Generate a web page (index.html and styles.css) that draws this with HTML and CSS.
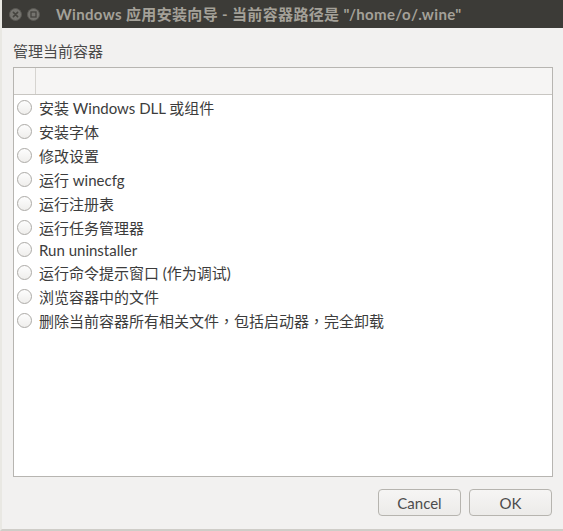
FILE: index.html
```html
<!DOCTYPE html>
<html lang="zh-CN">
<head>
<meta charset="utf-8">
<title>Windows 应用安装向导</title>
<link rel="stylesheet" href="styles.css">
</head>
<body>
<div class="window">
  <div class="titlebar">
    <div class="wm-buttons">
      <svg class="wm-btn" width="13" height="13" viewBox="0 0 13 13">
        <circle cx="6.5" cy="6.5" r="6" fill="#75746f" stroke="#5a5954" stroke-width="1"/>
        <path d="M4.4 4.4 L8.6 8.6 M8.6 4.4 L4.4 8.6" stroke="#45443f" stroke-width="1.6" stroke-linecap="round"/>
      </svg>
      <svg class="wm-btn" width="13" height="13" viewBox="0 0 13 13">
        <circle cx="6.5" cy="6.5" r="6" fill="#75746f" stroke="#5a5954" stroke-width="1"/>
        <rect x="4" y="4" width="5" height="5" fill="none" stroke="#45443f" stroke-width="1.3"/>
      </svg>
    </div>
    <div class="title">Windows 应用安装向导 - 当前容器路径是 "/home/o/.wine"</div>
  </div>
  <div class="content">
    <div class="label">管理当前容器</div>
    <div class="list">
      <div class="list-header">
        <div class="col-a"></div>
        <div class="col-b"></div>
      </div>
      <div class="rows">
        <div class="row"><span class="radio"></span><span class="text">安装 Windows DLL 或组件</span></div>
        <div class="row"><span class="radio"></span><span class="text">安装字体</span></div>
        <div class="row"><span class="radio"></span><span class="text">修改设置</span></div>
        <div class="row"><span class="radio"></span><span class="text">运行 winecfg</span></div>
        <div class="row"><span class="radio"></span><span class="text">运行注册表</span></div>
        <div class="row"><span class="radio"></span><span class="text">运行任务管理器</span></div>
        <div class="row short"><span class="radio"></span><span class="text">Run uninstaller</span></div>
        <div class="row"><span class="radio"></span><span class="text">运行命令提示窗口 (作为调试)</span></div>
        <div class="row"><span class="radio"></span><span class="text">浏览容器中的文件</span></div>
        <div class="row"><span class="radio"></span><span class="text">删除当前容器所有相关文件<span class="punct" lang="zh-TW">，</span>包括启动器<span class="punct" lang="zh-TW">，</span>完全卸载</span></div>
      </div>
    </div>
    <div class="actions">
      <button class="btn">Cancel</button>
      <button class="btn">OK</button>
    </div>
  </div>
</div>
</body>
</html>
```

FILE: styles.css
```css
html, body {
  margin: 0;
  padding: 0;
}
body {
  width: 563px;
  height: 531px;
  overflow: hidden;
  background: #f2f1f0;
  font-family: "Lato", "Noto Sans CJK SC", sans-serif;
  font-size: 15px;
  color: #3c3c3c;
}
.window {
  display: flex;
  flex-direction: column;
  height: 531px;
  box-sizing: border-box;
  border-bottom: 2px solid #cfcdc8;
  border-left: 2px solid #e9e8e3;
}
.titlebar {
  height: 28px;
  flex: none;
  background: #3c3b37;
  display: flex;
  align-items: center;
  padding-left: 7px;
}
.wm-buttons {
  display: flex;
  gap: 5px;
  align-items: center;
}
.wm-btn {
  display: block;
}
.title {
  margin-left: 16px;
  font-weight: bold;
  color: #a4a199;
  font-size: 15px;
  letter-spacing: 0.35px;
  white-space: nowrap;
  line-height: 28px;
}
.content {
  flex: 1;
  display: flex;
  flex-direction: column;
  padding: 11px 10px 0 11px;
}
.label {
  height: 24px;
  line-height: 24px;
  color: #4a4a4a;
  margin-bottom: 4px;
}
.list {
  height: 410px;
  box-sizing: border-box;
  border: 1px solid #b7b5b1;
  background: #ffffff;
  display: flex;
  flex-direction: column;
}
.list-header {
  height: 26px;
  flex: none;
  display: flex;
  background: #f6f5f4;
  border-bottom: 1px solid #c8c6c2;
}
.col-a {
  width: 21px;
  border-right: 1px solid #d6d4d0;
}
.col-b {
  flex: 1;
}
.rows {
  display: flex;
  flex-direction: column;
}
.row {
  height: 24px;
  display: flex;
  align-items: center;
  white-space: nowrap;
}
.row.short {
  height: 21px;
}
.radio {
  width: 13px;
  height: 13px;
  margin-left: 3px;
  border: 1px solid #acaaa6;
  border-radius: 50%;
  background: linear-gradient(#fdfdfd, #efeeec);
  flex: none;
}
.text {
  margin-left: 7px;
  color: #3c3c3c;
}
.punct {
  font-family: "Noto Sans CJK TC", sans-serif;
}
.actions {
  display: flex;
  justify-content: flex-end;
  gap: 8px;
  margin-top: 12px;
  margin-right: 1px;
}
.btn {
  width: 83px;
  height: 27px;
  box-sizing: border-box;
  border: 1px solid #b6b4af;
  border-radius: 4px;
  background: linear-gradient(#f6f5f4, #ecebe9);
  font-family: "Lato", "Noto Sans CJK SC", sans-serif;
  font-size: 15px;
  color: #4c4c4c;
  padding: 0;
}
```
